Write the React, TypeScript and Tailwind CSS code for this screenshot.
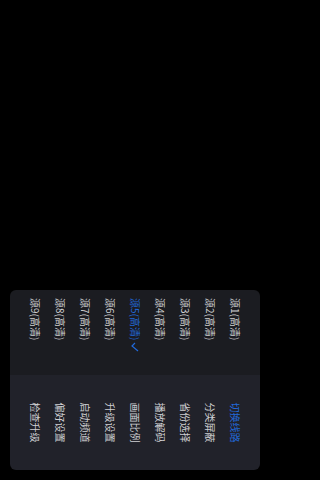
import React from "react";

const sources = ["源1(高清)", "源2(高清)", "源3(高清)", "源4(高清)", "源5(高清)", "源6(高清)", "源7(高清)", "源8(高清)", "源9(高清)"];
const menu = ["切换线路", "分类屏蔽", "省份选择", "播放解码", "画面比例", "升级设置", "启动频道", "偏好设置", "检查升级"];

export default function App() {
  return (
    <div className="w-full min-w-[270px] min-h-screen h-[480px] bg-black flex flex-col justify-end px-[10px] pb-[10px] font-['Noto_Sans_CJK_SC','Noto_Sans',sans-serif]">
      <div className="w-[250px] h-[180px] flex items-center justify-center">
        <div className="shrink-0 w-[180px] h-[250px] rotate-90 flex rounded-[6px] overflow-hidden">
          <div className="w-[85px] bg-[#1b1c21] flex flex-col py-[12px]">
            {sources.map((s, i) => (
              <div key={s} className={`h-[25px] flex items-center pl-[8px] text-[10px] leading-none ${i === 4 ? "text-[#2168d8]" : "text-[#cfcfd2]"}`}>
                <span>{s}</span>
                {i === 4 && (
                  <svg width="10" height="8" viewBox="0 0 10 8" className="ml-[2px]">
                    <polyline points="1,4 4,7 9,1" fill="none" stroke="#2168d8" strokeWidth="1.2" />
                  </svg>
                )}
              </div>
            ))}
          </div>
          <div className="flex-1 bg-[#21222a] flex flex-col py-[12px]">
            {menu.map((m, i) => (
              <div key={m} className={`h-[25px] flex items-center justify-center text-[10px] leading-none ${i === 0 ? "text-[#2168d8]" : "text-[#cfcfd2]"}`}>
                {m}
              </div>
            ))}
          </div>
        </div>
      </div>
    </div>
  );
}
